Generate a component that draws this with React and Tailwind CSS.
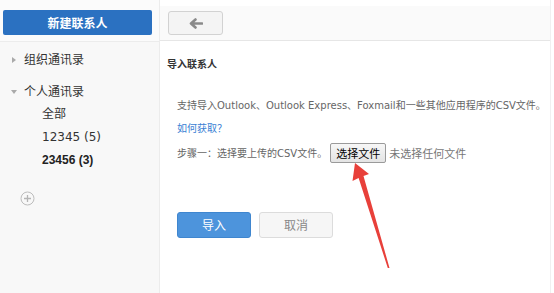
const font = { fontFamily: '"DejaVu Sans","Noto Sans CJK SC",sans-serif' };

function BackArrow() {
  return (
    <svg width="14" height="11" viewBox="0 0 14 11">
      <path d="M13 5.5H3M6.5 1.5L2 5.5l4.5 4" fill="none" stroke="#8a8a8a" strokeWidth="2.6" strokeLinecap="round" strokeLinejoin="round" />
    </svg>
  );
}

function PlusCircle() {
  return (
    <svg width="15" height="15" viewBox="0 0 15 15">
      <circle cx="7.5" cy="7.5" r="6.5" fill="none" stroke="#bdbdbd" strokeWidth="1" />
      <path d="M7.5 4v7M4 7.5h7" stroke="#b5b5b5" strokeWidth="1.3" />
    </svg>
  );
}

function RedArrow() {
  return (
    <svg className="absolute left-0 top-0 pointer-events-none" width="554" height="293">
      <polygon
        points="355,163 369,174 363.5,176 389.5,268 387.8,268 358.6,178 352.5,181"
        fill="#e8403a"
      />
    </svg>
  );
}

export default function App() {
  return (
    <div className="relative w-[554px] h-[293px] flex bg-white overflow-hidden text-[#333]" style={font}>
      <aside className="w-[160px] h-full bg-[#f8f8f8] border-r border-[#ececec] flex flex-col">
        <div className="h-[42px] bg-[#fbfbfb] border-b border-[#ececec] pt-[10px] pl-[3px]">
          <button className="w-[149px] h-[25px] rounded-[2px] bg-[#2b71c1] text-white text-[12px] font-bold flex items-center justify-center" style={{ fontFamily: '"Noto Sans CJK SC",sans-serif' }}>
            新建联系人
          </button>
        </div>
        <div className="pt-[8px] text-[12px]">
          <div className="h-[20px] flex items-center">
            <span className="w-0 h-0 ml-[12px] mr-[8px] border-y-[3px] border-y-transparent border-l-[4px] border-l-[#aaa]" />
            <span>组织通讯录</span>
          </div>
          <div className="h-[20px] mt-[12px] flex items-center">
            <span className="w-0 h-0 ml-[11px] mr-[7px] border-x-[3px] border-x-transparent border-t-[4px] border-t-[#aaa]" />
            <span>个人通讯录</span>
          </div>
          <div className="pl-[42px]">
            <div className="h-[23px] flex items-center">全部</div>
            <div className="h-[23px] flex items-center">12345 (5)</div>
            <div className="h-[23px] flex items-center font-bold text-[#222]" style={{ fontFamily: '"Liberation Sans",sans-serif' }}>23456 (3)</div>
          </div>
          <div className="mt-[20px] pl-[20px]">
            <PlusCircle />
          </div>
        </div>
      </aside>

      <main className="w-[391px] h-full flex flex-col border-r border-[#f0f0f0]">
        <div className="mt-[6px] h-[35px] bg-[#fafafa] border-b border-[#e6e6e6] pl-[8px] pt-[5px]">
          <button className="w-[55px] h-[24px] rounded-[3px] bg-[#f4f4f4] border border-[#d2d2d2] flex items-center justify-center">
            <BackArrow />
          </button>
        </div>
        <div className="pl-[7px] pt-[14px]">
          <div className="h-[16px] flex items-center text-[10px] font-bold text-[#333]" style={{ fontFamily: '"Noto Sans CJK SC",sans-serif' }}>导入联系人</div>
          <div className="pl-[10px]">
            <div className="mt-[26px] h-[16px] flex items-center text-[10px] text-[#666] whitespace-nowrap">
              支持导入Outlook、Outlook Express、Foxmail和一些其他应用程序的CSV文件。
            </div>
            <div className="mt-[7px] h-[16px] flex items-center text-[10px] text-[#3b7fd4]">如何获取？</div>
            <div className="mt-[7px] h-[20px] flex items-center text-[10px] text-[#666] whitespace-nowrap">
              <span>步骤一：选择要上传的CSV文件。</span>
              <button className="ml-[3px] h-[20px] px-[5px] border border-[#9a9a9a] rounded-[2px] bg-gradient-to-b from-[#f7f7f7] to-[#e4e4e4] text-[11px] text-black flex items-center" style={{ fontFamily: '"Noto Sans CJK SC",sans-serif' }}>
                选择文件
              </button>
              <span className="ml-[3px] text-[11px] text-[#777]" style={{ fontFamily: '"Noto Sans CJK SC",sans-serif' }}>未选择任何文件</span>
            </div>
            <div className="mt-[49px] flex gap-[8px]" style={{ fontFamily: '"Noto Sans CJK SC",sans-serif' }}>
              <button className="w-[74px] h-[26px] rounded-[3px] bg-[#4d94dc] border border-[#3f86cf] text-white text-[12px]">导入</button>
              <button className="w-[74px] h-[26px] rounded-[3px] bg-[#f6f6f6] border border-[#dcdcdc] text-[#888] text-[12px]">取消</button>
            </div>
          </div>
        </div>
      </main>

      <RedArrow />
    </div>
  );
}
